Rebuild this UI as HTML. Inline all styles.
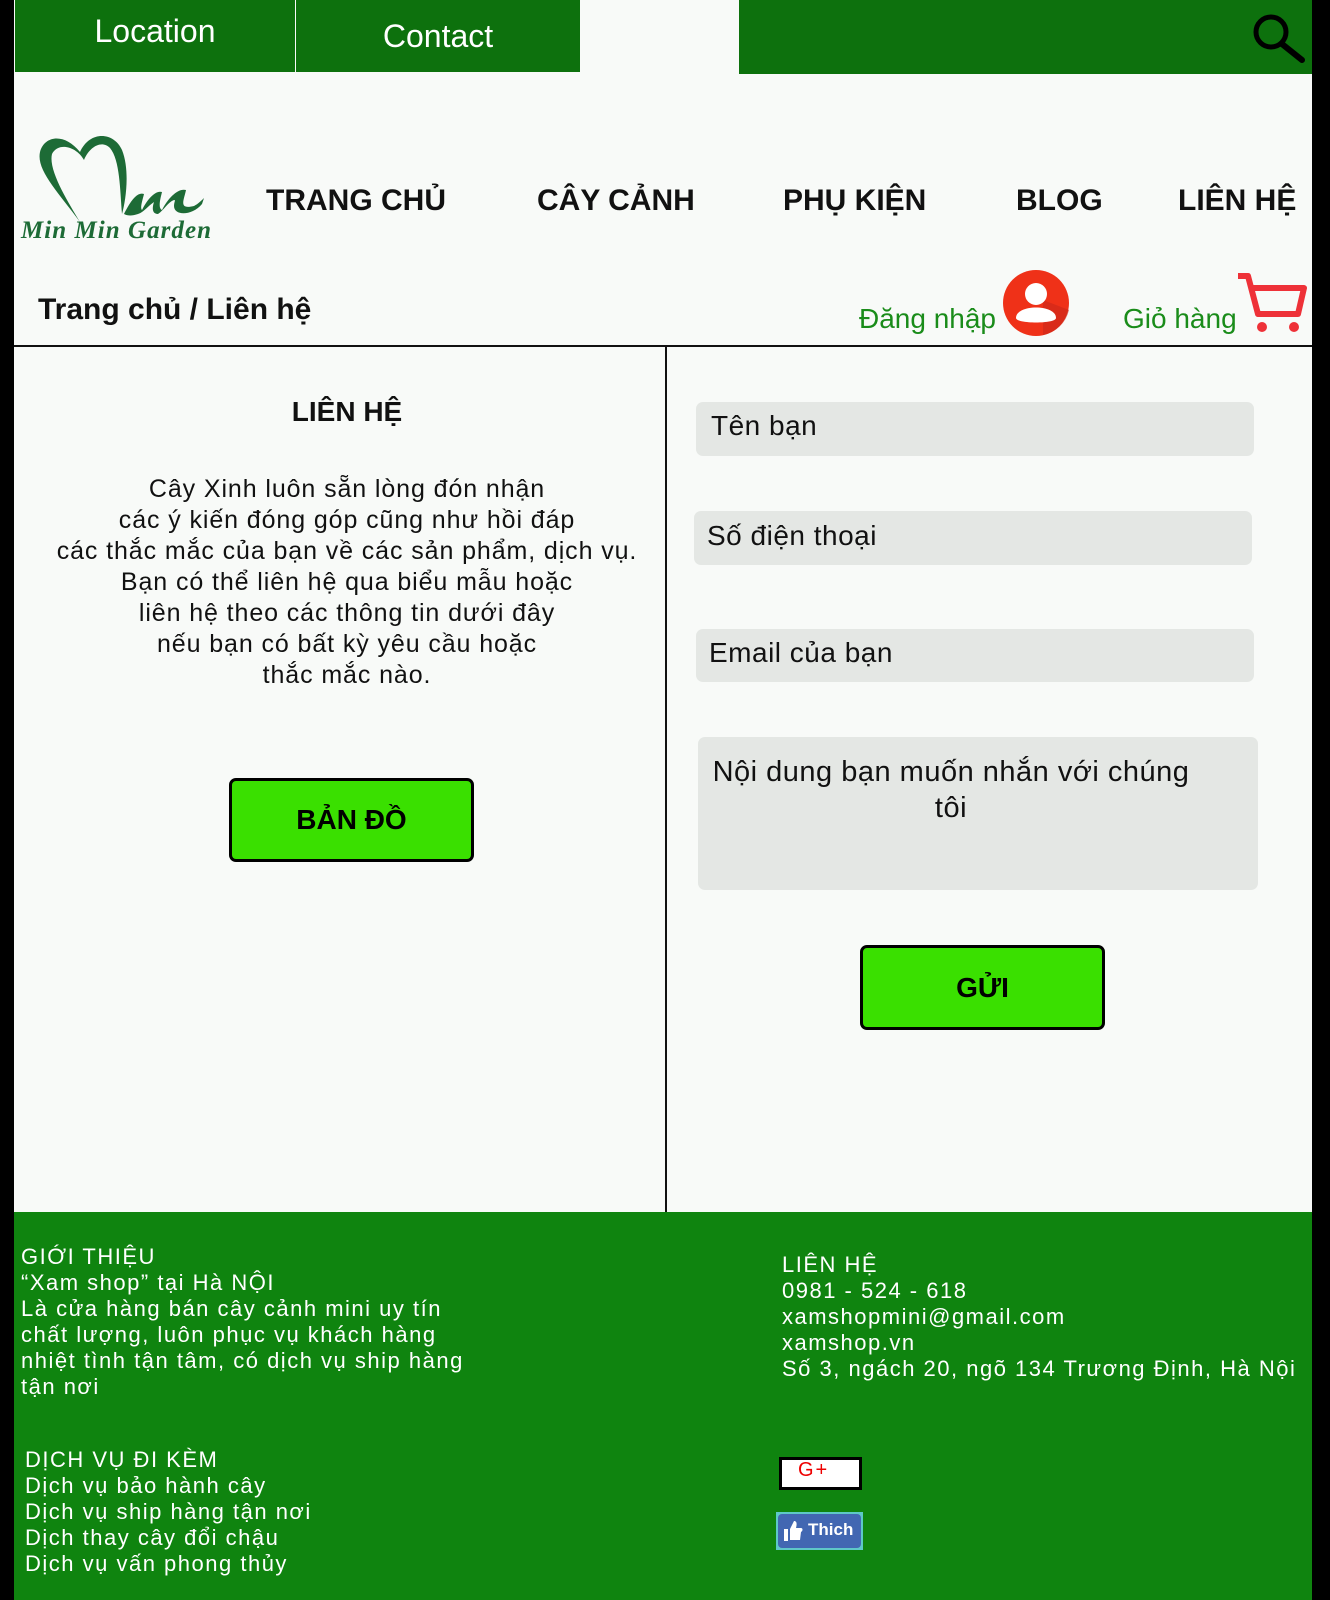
<!DOCTYPE html>
<html><head><meta charset="utf-8"><style>
*{margin:0;padding:0;box-sizing:border-box}
body{width:1330px;height:1600px;background:#000;font-family:"Liberation Sans",sans-serif;position:relative;overflow:hidden}
.abs{position:absolute}
#page{position:absolute;left:14px;top:0;width:1298px;height:1600px;background:#f8faf8}
.topg{background:#0d710d;color:#fff;font-size:32px;text-align:center}
.nav{font-weight:bold;font-size:30px;color:#111;top:184px}
.inp{background:#e4e7e4;border-radius:7px;font-size:28px;color:#111;padding-left:15px;letter-spacing:0.5px}
.btn{background:#3ae000;border:3px solid #000;border-radius:7px;font-weight:bold;font-size:28px;text-align:center}
.ft{color:#fff;font-size:22px;letter-spacing:1.5px;line-height:26px}
</style></head><body>
<div id="page"></div>
<div class="abs topg" style="left:15px;top:0;width:280px;height:72px;line-height:62px">Location</div>
<div class="abs topg" style="left:296px;top:0;width:284px;height:72px;line-height:72px">Contact</div>
<div class="abs topg" style="left:739px;top:0;width:573px;height:74px"></div>
<svg class="abs" style="left:1250px;top:8px" width="60" height="56" viewBox="0 0 60 56"><circle cx="21" cy="24" r="15" fill="none" stroke="#000" stroke-width="5"/><line x1="32" y1="36" x2="52" y2="52" stroke="#000" stroke-width="6" stroke-linecap="round"/></svg>

<svg class="abs" style="left:18px;top:130px" width="200" height="120" viewBox="0 0 200 120">
<path d="M62 92 C40 62 18 40 22 22 C26 6 46 2 62 22 C72 0 96 2 104 20 C112 40 108 70 104 84 C102 60 102 30 92 18 C84 10 72 16 66 30 C58 16 40 12 34 24 C30 40 50 72 62 92 Z" fill="#1d6b36"/>
<path d="M106 84 C114 68 120 62 126 64 C124 72 122 78 124 80 C130 68 138 60 144 62 C142 70 140 78 144 80 C150 68 160 58 168 60 C166 70 160 80 176 76 C180 74 184 70 186 68 L184 74 C174 86 156 86 156 76 C156 72 158 70 156 70 C150 72 146 80 140 84 C134 84 134 78 136 72 C130 76 126 82 120 84 C114 86 110 86 106 84 Z" fill="#1d6b36"/>
<text x="3" y="108" font-family="Liberation Serif,serif" font-style="italic" font-weight="bold" font-size="25" fill="#1d6b36" textLength="190">Min Min Garden</text>
</svg>

<div class="abs nav" style="left:266px">TRANG CHỦ</div>
<div class="abs nav" style="left:537px">CÂY CẢNH</div>
<div class="abs nav" style="left:783px">PHỤ KIỆN</div>
<div class="abs nav" style="left:1016px">BLOG</div>
<div class="abs nav" style="left:1178px">LIÊN HỆ</div>

<div class="abs" style="left:38px;top:293px;font-size:30px;font-weight:bold;color:#111">Trang chủ / Liên hệ</div>
<div class="abs" style="left:859px;top:303px;font-size:28px;color:#1a8c1a">Đăng nhập</div>
<svg class="abs" style="left:1003px;top:270px" width="66" height="66" viewBox="0 0 66 66"><circle cx="33" cy="33" r="33" fill="#ef3118"/><path d="M40 30 L66 40 A33 33 0 0 1 40 65 Z" fill="#c9281a" opacity="0.6"/><circle cx="33" cy="24" r="11" fill="#fff"/><path d="M13 48 C13 34 53 34 53 48 C53 54 13 54 13 48 Z" fill="#fff"/></svg>
<div class="abs" style="left:1123px;top:303px;font-size:28px;color:#1a8c1a">Giỏ hàng</div>
<svg class="abs" style="left:1236px;top:272px" width="72" height="62" viewBox="0 0 72 62"><path d="M2 4 H12 L22 42 H62 L68 16 H16" fill="none" stroke="#ee3138" stroke-width="6" stroke-linejoin="round"/><circle cx="26" cy="55" r="5" fill="#ee3138"/><circle cx="58" cy="55" r="5" fill="#ee3138"/></svg>

<div class="abs" style="left:14px;top:345px;width:1298px;height:2px;background:#111"></div>
<div class="abs" style="left:665px;top:346px;width:1.5px;height:868px;background:#111"></div>

<div class="abs" style="left:20px;top:396px;width:654px;text-align:center;font-size:28px;font-weight:bold;color:#111">LIÊN HỆ</div>
<div class="abs" style="left:20px;top:474px;width:654px;text-align:center;font-size:25px;line-height:31px;letter-spacing:0.9px;color:#111">Cây Xinh luôn sẵn lòng đón nhận<br>các ý kiến đóng góp cũng như hồi đáp<br>các thắc mắc của bạn về các sản phẩm, dịch vụ.<br>Bạn có thể liên hệ qua biểu mẫu hoặc<br>liên hệ theo các thông tin dưới đây<br>nếu bạn có bất kỳ yêu cầu hoặc<br>thắc mắc nào.</div>
<div class="abs btn" style="left:229px;top:778px;width:245px;height:84px;line-height:78px">BẢN ĐỒ</div>

<div class="abs inp" style="left:696px;top:402px;width:558px;height:54px;line-height:48px">Tên bạn</div>
<div class="abs inp" style="left:694px;top:511px;width:558px;height:54px;line-height:50px;padding-left:13px">Số điện thoại</div>
<div class="abs inp" style="left:696px;top:629px;width:558px;height:53px;line-height:48px;padding-left:13px">Email của bạn</div>
<div class="abs inp" style="left:698px;top:737px;width:560px;height:153px;padding:17px 66px 0 12px;line-height:36px;text-align:center;font-size:29px">Nội dung bạn muốn nhắn với chúng tôi</div>
<div class="abs btn" style="left:860px;top:945px;width:245px;height:85px;line-height:79px">GỬI</div>

<div class="abs" style="left:14px;top:1212px;width:1298px;height:388px;background:#0f840f"></div>
<div class="abs ft" style="left:21px;top:1244px">GIỚI THIỆU<br>“Xam shop” tại Hà NỘI<br>Là cửa hàng bán cây cảnh mini uy tín<br>chất lượng, luôn phục vụ khách hàng<br>nhiệt tình tận tâm, có dịch vụ ship hàng<br>tận nơi</div>
<div class="abs ft" style="left:25px;top:1447px">DỊCH VỤ ĐI KÈM<br>Dịch vụ bảo hành cây<br>Dịch vụ ship hàng tận nơi<br>Dịch thay cây đổi chậu<br>Dịch vụ vấn phong thủy</div>
<div class="abs ft" style="left:782px;top:1252px">LIÊN HỆ<br>0981 - 524 - 618<br>xamshopmini@gmail.com<br>xamshop.vn<br>Số 3, ngách 20, ngõ 134 Trương Định, Hà Nội</div>
<div class="abs" style="left:779px;top:1457px;width:83px;height:33px;background:#fff;border:3px solid #000;color:#e00;font-size:20px;padding-left:16px;line-height:20px;letter-spacing:2px">G+</div>
<div class="abs" style="left:776px;top:1512px;width:87px;height:38px;background:#5ec8c8;padding:2px"><div style="background:#4267b2;border-radius:4px;height:34px;color:#fff;font-weight:bold;font-size:17px;line-height:32px;padding-left:30px;position:relative">Thich<svg style="position:absolute;left:5px;top:6px" width="20" height="22" viewBox="0 0 20 22"><rect x="1" y="9" width="4" height="12" fill="#fff"/><path d="M7 9 L11 1 C14 1 14 4 13 8 H18 C20 8 20 11 18 12 L17 20 H7 Z" fill="#fff"/></svg></div></div>
</body></html>
